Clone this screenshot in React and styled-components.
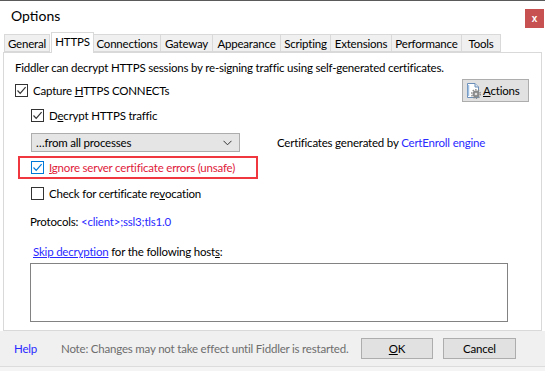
import React from "react";
import styled, { createGlobalStyle } from "styled-components";

const Global = createGlobalStyle`
  html, body { margin: 0; padding: 0; background: #f4f4f4; }
  body { font-family: Lato, "Noto Sans", sans-serif; font-size: 11.5px; letter-spacing: -0.2px; color: #000; }
  * { box-sizing: border-box; }
`;

const Window = styled.div`
  width: 545px;
  height: 367px;
  display: flex;
  flex-direction: column;
  background: #ffffff;
  border-top: 1px solid #5a5a5a;
  border-bottom: 1px solid #dcdcdc;
`;

const TitleBar = styled.div`
  height: 30px;
  display: flex;
  align-items: center;
  justify-content: space-between;
  padding-left: 11px;
  padding-right: 1px;
`;

const Title = styled.div`
  font-size: 14px;
  letter-spacing: 0;
  color: #000;
  margin-top: -1px;
`;

const CloseBtn = styled.div`
  width: 19px;
  height: 19px;
  margin-top: 5px;
  background: #c75050;
  color: #fff;
  font-family: "Liberation Sans", sans-serif;
  font-weight: bold;
  font-size: 10px;
  display: flex;
  align-items: center;
  justify-content: center;
`;

const TabStrip = styled.div`
  display: flex;
  align-items: flex-end;
  height: 21px;
  padding-left: 4px;
  position: relative;
  z-index: 1;
`;

const Tab = styled.div`
  width: ${(p) => p.$w}px;
  height: ${(p) => (p.$active ? 21 : 18)}px;
  margin-bottom: ${(p) => (p.$active ? -1 : 0)}px;
  margin-left: ${(p) => (p.$active ? 1 : 0)}px;
  background: ${(p) => (p.$active ? "#ffffff" : "#f0f0f0")};
  border: 1px solid #d9d9d9;
  border-bottom: ${(p) => (p.$active ? "none" : "1px solid #d9d9d9")};
  border-left: ${(p) => (p.$first || p.$active ? "1px solid #d9d9d9" : "none")};
  display: flex;
  align-items: ${(p) => (p.$active ? "flex-start" : "center")};
  padding-top: ${(p) => (p.$active ? 2 : 0)}px;
  justify-content: center;
  white-space: nowrap;
`;

const Body = styled.div`
  padding: 0 3px 0 3px;
  display: flex;
  flex-direction: column;
`;

const Panel = styled.div`
  border: 1px solid #d9d9d9;
  background: #fff;
  height: 279px;
  display: flex;
  flex-direction: column;
  padding-left: 11px;
  padding-right: 12px;
`;

const Intro = styled.div`
  height: 16px;
  line-height: 16px;
  margin-top: 7px;
  white-space: nowrap;
`;

const TopRow = styled.div`
  display: flex;
  justify-content: space-between;
  align-items: flex-start;
  margin-top: 3px;
  height: 23px;
`;

const CheckRow = styled.label`
  display: flex;
  align-items: center;
  gap: 5px;
  height: 20px;
  margin-left: ${(p) => p.$indent || 0}px;
  margin-top: ${(p) => p.$mt || 0}px;
  color: ${(p) => p.$color || "#000"};
  white-space: nowrap;
`;

const Box = styled.span`
  width: 13px;
  height: 13px;
  border: 1px solid ${(p) => (p.$focus ? "#0078d7" : "#333333")};
  background: #fff;
  display: flex;
  align-items: center;
  justify-content: center;
  flex-shrink: 0;
`;

const ActionsBtn = styled.div`
  width: 67px;
  height: 23px;
  background: #e1e1e1;
  border: 1px solid #adadad;
  display: flex;
  align-items: center;
  padding-left: 2px;
  gap: 1px;
  white-space: nowrap;
`;

const SelectRow = styled.div`
  display: flex;
  align-items: center;
  margin-top: 8px;
  margin-left: 16px;
  height: 19px;
`;

const Select = styled.div`
  width: 209px;
  height: 19px;
  background: #e5e5e5;
  border: 1px solid #adadad;
  display: flex;
  align-items: center;
  justify-content: space-between;
  padding: 0 7px 0 4px;
  white-space: nowrap;
`;

const CertText = styled.div`
  margin-left: 37px;
  white-space: nowrap;
`;

const Link = styled.span`
  color: #2a2aff;
  text-decoration: ${(p) => (p.$u ? "underline" : "none")};
`;

const Highlight = styled.div`
  width: 240px;
  height: 23px;
  border: 2px solid #f0363f;
  margin-top: 4px;
  margin-left: 3px;
  display: flex;
  align-items: center;
  padding-left: 11px;
`;

const TextLine = styled.div`
  height: 16px;
  line-height: 16px;
  margin-top: ${(p) => p.$mt}px;
  margin-left: ${(p) => p.$ml}px;
  white-space: nowrap;
`;

const HostBox = styled.div`
  width: 478px;
  height: 59px;
  margin-top: 3px;
  margin-left: 15px;
  border: 1px solid #828282;
  background: #fff;
`;

const Footer = styled.div`
  flex: 1;
  display: flex;
  align-items: center;
  padding-left: 14px;
  padding-bottom: 1px;
  background: #f0f0f0;
`;

const Help = styled.span`
  color: #2a2aff;
  width: 47px;
`;

const Note = styled.span`
  color: #6d6d6d;
  white-space: nowrap;
  width: 300px;
`;

const Button = styled.div`
  width: ${(p) => p.$w}px;
  height: 21px;
  margin-left: ${(p) => p.$ml}px;
  background: #e1e1e1;
  border: 1px solid #adadad;
  display: flex;
  align-items: center;
  justify-content: center;
`;

const Check = ({ blue }) => (
  <svg width="11" height="11" viewBox="0 0 11 11">
    <path
      d="M1.5 5.5 L4.2 8.3 L9.6 2.2"
      fill="none"
      stroke={blue ? "#0078d7" : "#333"}
      strokeWidth="1.2"
    />
  </svg>
);

const Chevron = () => (
  <svg width="9" height="6" viewBox="0 0 9 6">
    <path d="M0.5 0.8 L4.5 4.8 L8.5 0.8" fill="none" stroke="#333" strokeWidth="1" />
  </svg>
);

const ActionsIcon = () => (
  <svg width="17" height="17" viewBox="0 0 17 17">
    <path d="M2.5 1.5 H10 L13.5 5 V15.5 H2.5 Z" fill="#fff" stroke="#6b8fb8" />
    <path d="M10 1.5 V5 H13.5" fill="#dbe6f2" stroke="#6b8fb8" />
    <path d="M3.5 3 V14" stroke="#9fc0e3" strokeWidth="1.5" />
    <circle cx="11" cy="12" r="3.4" fill="#8a8a8a" />
    <circle cx="11" cy="12" r="4.3" fill="none" stroke="#8a8a8a" strokeWidth="1.4" strokeDasharray="1.4 1.3" />
    <circle cx="11" cy="12" r="1.3" fill="#e1e1e1" />
  </svg>
);

const tabs = [
  ["General", 46],
  ["HTTPS", 43],
  ["Connections", 67],
  ["Gateway", 52],
  ["Appearance", 68],
  ["Scripting", 50],
  ["Extensions", 61],
  ["Performance", 70],
  ["Tools", 39],
];

export default function App() {
  return (
    <>
      <Global />
      <Window>
        <TitleBar>
          <Title>Options</Title>
          <CloseBtn>x</CloseBtn>
        </TitleBar>
        <TabStrip>
          {tabs.map(([name, w], i) => (
            <Tab key={name} $w={w} $active={name === "HTTPS"} $first={i === 0}>
              {name}
            </Tab>
          ))}
        </TabStrip>
        <Body>
          <Panel>
            <Intro>
              Fiddler can decrypt HTTPS sessions by re-signing traffic using self-generated certificates.
            </Intro>
            <TopRow>
              <CheckRow $mt={1}>
                <Box>
                  <Check />
                </Box>
                <span>
                  Capture <u>H</u>TTPS CONNECTs
                </span>
              </CheckRow>
              <ActionsBtn>
                <ActionsIcon />
                <span>
                  <u>A</u>ctions
                </span>
              </ActionsBtn>
            </TopRow>
            <CheckRow $indent={16} $mt={3}>
              <Box>
                <Check />
              </Box>
              <span>
                D<u>e</u>crypt HTTPS traffic
              </span>
            </CheckRow>
            <SelectRow>
              <Select>
                <span>…from all processes</span>
                <Chevron />
              </Select>
              <CertText>
                Certificates generated by <Link>CertEnroll engine</Link>
              </CertText>
            </SelectRow>
            <Highlight>
              <CheckRow $color="#e0203a">
                <Box $focus>
                  <Check blue />
                </Box>
                <span>
                  <u>I</u>gnore server certificate errors (unsafe)
                </span>
              </CheckRow>
            </Highlight>
            <CheckRow $indent={16} $mt={4}>
              <Box />
              <span>
                Check for certificate re<u>v</u>ocation
              </span>
            </CheckRow>
            <TextLine $mt={11} $ml={15}>
              Protocols: <Link>&lt;client&gt;;ssl3;tls1.0</Link>
            </TextLine>
            <TextLine $mt={14} $ml={18}>
              <Link $u>Skip decryption</Link> for the following host<u>s</u>:
            </TextLine>
            <HostBox />
          </Panel>
        </Body>
        <Footer>
          <Help>Help</Help>
          <Note>Note: Changes may not take effect until Fiddler is restarted.</Note>
          <Button $w={72} $ml={0}>
            <span>
              <u>O</u>K
            </span>
          </Button>
          <Button $w={73} $ml={10}>
            Cancel
          </Button>
        </Footer>
      </Window>
    </>
  );
}
